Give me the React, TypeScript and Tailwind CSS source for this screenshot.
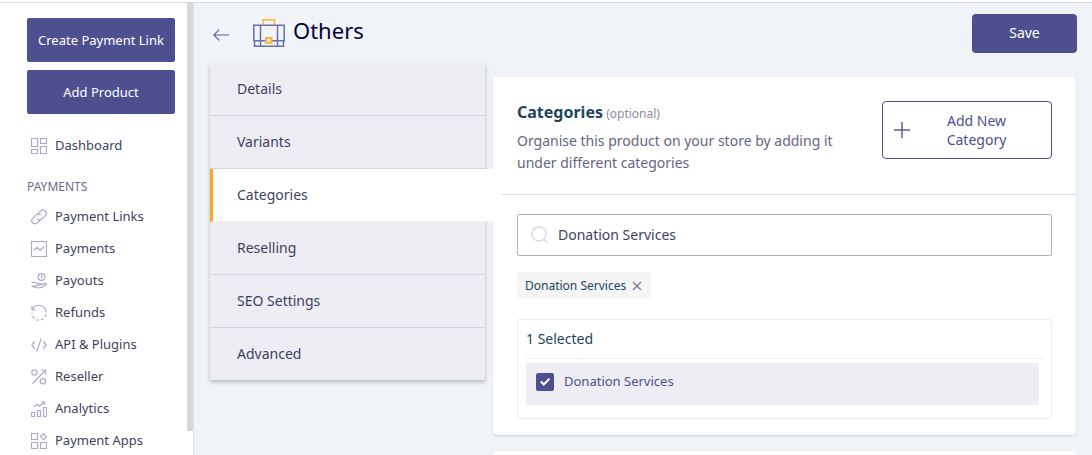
import { useState } from "react";
import type { ReactNode } from "react";

type IconProps = {
  children: ReactNode;
};

type MenuItem = {
  label: string;
  icon: ReactNode;
};

const Icon = ({ children }: IconProps) => (
  <svg
    viewBox="0 0 16 16"
    className="w-4 h-4 shrink-0"
    fill="none"
    stroke="#a9a9cf"
    strokeWidth="1.2"
    aria-hidden="true"
  >
    {children}
  </svg>
);

const dashboardIcon = (
  <Icon>
    <path d="M.5.5h6v8h-6zM9.5.5h6v5h-6zM.5 11.5h6v4h-6zM9.5 8.5h6v7h-6z" />
  </Icon>
);

const menu: MenuItem[] = [
  {
    label: "Payment Links",
    icon: (
      <Icon>
        <path d="M6.6 5.2l3-3.1a3.2 3.2 0 0 1 4.700 4.500l-3.300 3.300a3.200 3.200 0 0 1-4.700 0M9.400 10.800l-3 3.100a3.200 3.200 0 0 1-4.700-4.500L5 6.100a3.200 3.200 0 0 1 4.700 0" />
      </Icon>
    ),
  },
  {
    label: "Payments",
    icon: (
      <Icon>
        <path d="M.5.5h15v15H.5zM3 9.500l3.200-3.200 3 3L13 5.800" />
      </Icon>
    ),
  },
  {
    label: "Payouts",
    icon: (
      <Icon>
        <circle cx="10.5" cy="4" r="3.4" />
        <path d="M10 2.500h.7v3" />
        <path d="M.5 9.500C3 8.600 4.500 9.200 6 10.500h3c1.300 0 1.300 1.700 0 1.700H6M10.300 11.600l3.600-1.200c1.600-.4 2 .9.900 1.500-2.300 1.500-4.300 3.100-6.800 3.100-2.800 0-4.500-1.500-7.500-1.500z" />
      </Icon>
    ),
  },
  {
    label: "Refunds",
    icon: (
      <Icon>
        <path d="M1 1v4h4M1.500 4.700A7 7 0 0 1 15 7.500" />
        <path
          d="M15 8.500A7 7 0 0 1 1 8"
          strokeDasharray="2.5 2.5"
          strokeDashoffset="-1"
        />
      </Icon>
    ),
  },
  {
    label: "API & Plugins",
    icon: (
      <Icon>
        <path d="M3.700 4.500L.7 8l3 3.500M12.300 4.500l3 3.500-3 3.500M10.300 1.500l-4.600 13" />
      </Icon>
    ),
  },
  {
    label: "Reseller",
    icon: (
      <Icon>
        <circle cx="3.5" cy="3.5" r="2.7" />
        <circle cx="12" cy="12.3" r="2.7" />
        <path d="M1.500 14.500L14.500 1.200M10 1h4.500v4.500" />
      </Icon>
    ),
  },
  {
    label: "Analytics",
    icon: (
      <Icon>
        <path d="M.5 11.500h3v4h-3zM6.500 9.500h3v6h-3zM12.500 6.500h3v9h-3zM3 5.500l3-2 2.500 1.500L13 1.500M9.800 1h3.700v3" />
      </Icon>
    ),
  },
  {
    label: "Payment Apps",
    icon: (
      <Icon>
        <path d="M.5.5h6v6h-6zM.5 9.500h6v6h-6zM9.500 9.500h6v6h-6zM12.500.6l3 3-3 3-3-3z" />
      </Icon>
    ),
  },
];

const tabs = [
  "Details",
  "Variants",
  "Categories",
  "Reselling",
  "SEO Settings",
  "Advanced",
];

const Sidebar = () => (
  <aside className="w-[187px] shrink-0 overflow-hidden bg-white pt-[15px] pl-[27px] pr-3 text-[13px] text-[#3f3f5f]">
    <div className="flex flex-col gap-2 text-white">
      <button className="h-11 rounded-xs bg-[#4e4f8f] pt-px whitespace-nowrap">
        Create Payment Link
      </button>
      <button className="h-11 rounded-xs bg-[#4e4f8f] pt-px">
        Add Product
      </button>
    </div>

    <nav className="mt-4">
      <a href="#dashboard" className="flex h-8 items-center gap-2 pl-1">
        {dashboardIcon}
        Dashboard
      </a>
      <h2 className="mt-[15px] h-5 text-xs leading-5 text-[#6b6b8d]">
        PAYMENTS
      </h2>
      <ul className="mt-1">
        {menu.map((item) => (
          <li key={item.label}>
            <a
              href="#menu"
              className="flex h-8 items-center gap-2 pl-1 whitespace-nowrap"
            >
              {item.icon}
              {item.label}
            </a>
          </li>
        ))}
      </ul>
    </nav>
  </aside>
);

const BriefcaseIcon = () => (
  <svg viewBox="0 0 32 28" className="w-8 h-7" fill="none" aria-hidden="true">
    <g stroke="#6c6da6" strokeWidth="1.5">
      <path d="M.8 6.200h30.400v15.600H.8zM1.500 21.800h29v5.400h-29zM7.500 6.200v21M24.500 6.200v21" />
    </g>
    <path d="M10 6V.8h11.500V6" stroke="#fdb833" strokeWidth="1.5" />
    <path
      d="M13 18.800h5.500v5H13z"
      fill="#f0f4f8"
      stroke="#fdb01e"
      strokeWidth="1.8"
    />
  </svg>
);

export default function App() {
  const [active, setActive] = useState("Categories");
  const [query, setQuery] = useState("Donation Services");
  const [checked, setChecked] = useState(true);

  return (
    <div className="flex h-screen flex-col overflow-hidden bg-white font-['Noto_Sans',sans-serif]">
      <div className="h-[3px] shrink-0 border-b border-[#d8d8e0]" />
      <div className="flex min-h-0 flex-1">
        <Sidebar />
        {/* Scroll track */}
        <div className="w-[7px] shrink-0 border-r border-[#e2e5ec] bg-white pb-6">
          <div className="h-full bg-[#d7d6dd]" />
        </div>

        <main className="min-w-0 flex-1 overflow-hidden bg-[#f0f4f8] pl-4 pr-[15px]">
          <header className="flex h-[60px] items-center">
            <button aria-label="Back" className="ml-[3px] mt-1">
              <svg
                viewBox="0 0 16 12"
                className="w-4 h-3"
                fill="none"
                stroke="#5c5d9c"
                strokeWidth="1.2"
              >
                <path d="M16 6H.8M6.200.6L.8 6l5.400 5.400" />
              </svg>
            </button>
            <div className="ml-6">
              <BriefcaseIcon />
            </div>
            <h1 className="ml-2 mb-1.5 text-[22px] leading-8 text-[#06003f]">
              Others
            </h1>
            <button className="ml-auto h-[39px] w-[105px] rounded-sm bg-[#4e4f8f] text-sm text-white">
              Save
            </button>
          </header>

          <div className="flex items-start pr-px">
            {/* Product tabs */}
            <nav className="relative z-10 mr-2 w-[275px] shrink-0 bg-[#eeedf4] shadow-[0_2px_4px_rgba(0,0,0,0.25)]">
              {tabs.map((tab) => (
                <button
                  key={tab}
                  onClick={() => setActive(tab)}
                  className={`block h-[53px] border-b text-left text-sm text-[#3f3f5f] last:h-[52px] last:border-b-0 ${
                    tab === active
                      ? "w-[283px] border-b-[#eeedf4] border-l-3 border-l-[#fdaa1c] bg-white pl-6"
                      : "w-full border-b-[#d5d4dc] pl-[27px]"
                  }`}
                >
                  {tab}
                </button>
              ))}
            </nav>

            <div className="mt-[14px] min-w-0 flex-1">
              <section className="rounded-sm bg-white pb-4 shadow-[0_1px_2px_rgba(120,150,190,0.35)]">
                <div className="flex items-start justify-between px-6 pt-6">
                  <div>
                    <h2 className="text-base leading-[22px] font-bold text-[#1c455c]">
                      Categories{" "}
                      <span className="-ml-px text-xs font-normal text-[#8f8aa3]">
                        (optional)
                      </span>
                    </h2>
                    <p className="mt-[7px] max-w-[340px] text-sm leading-[22px] text-[#66657f]">
                      Organise this product on your store by adding it under
                      different categories
                    </p>
                  </div>
                  <button className="flex h-[58px] w-[170px] shrink-0 items-center rounded-sm border border-[#4e4f8f] pl-[11px] text-sm leading-[19px] text-[#4e4f8f]">
                    <svg
                      viewBox="0 0 16 16"
                      className="w-4 h-4"
                      stroke="#5c5d9c"
                      aria-hidden="true"
                    >
                      <path d="M8 0v16M0 8h16" strokeWidth="1.5" />
                    </svg>
                    <span className="flex-1 pl-7 pr-9">Add New Category</span>
                  </button>
                </div>

                <div className="mt-5 ml-[9px] border-t border-[#d9d9de]" />

                <div className="px-6 pt-[19px]">
                  <label className="flex h-[42px] items-center gap-[10px] rounded-xs border border-[#b3b0bf] px-3">
                    <svg
                      viewBox="0 0 18 18"
                      className="w-[18px] h-[18px] shrink-0"
                      fill="none"
                      stroke="#d9d9e0"
                      strokeWidth="1.4"
                      aria-hidden="true"
                    >
                      <circle cx="9" cy="8" r="7" />
                      <path d="M13.800 13l3.500 4" />
                    </svg>
                    <input
                      type="text"
                      aria-label="Search categories"
                      value={query}
                      onChange={(e) => setQuery(e.target.value)}
                      className="min-w-0 flex-1 text-sm text-[#3f3f5f] outline-none"
                    />
                  </label>

                  {/* Selected chip */}
                  <div className="mt-4 flex h-[27px] w-fit items-center gap-[6px] bg-[#f5f5f5] pl-2 pr-[9px] text-xs text-[#1c455c]">
                    Donation Services
                    <button aria-label="Remove Donation Services">
                      <svg
                        viewBox="0 0 10 10"
                        className="w-[10px] h-[10px]"
                        stroke="#77768a"
                        strokeWidth="1.3"
                      >
                        <path d="M1 1l8 8M9 1L1 9" />
                      </svg>
                    </button>
                  </div>

                  <div className="mt-5 rounded-xs border border-[#eeedf2] px-2 pb-[13px]">
                    <h3 className="h-[39px] border-b border-[#eeedf0] text-sm leading-[38px] text-[#1c455c]">
                      1 Selected
                    </h3>
                    <label className="mt-1 mr-1 flex h-[42px] items-center gap-[10px] bg-[#eeedf4] px-[10px] pb-1 text-[13px] text-[#4e4f8f]">
                      <span className="grid">
                        <input
                          type="checkbox"
                          checked={checked}
                          onChange={(e) => setChecked(e.target.checked)}
                          className="col-start-1 row-start-1 h-[18px] w-[18px] appearance-none rounded-xs border border-[#4e4f8f] bg-white checked:bg-[#4e4f8f]"
                        />
                        <svg
                          viewBox="0 0 18 18"
                          className="pointer-events-none col-start-1 row-start-1 h-[18px] w-[18px]"
                          fill="none"
                          stroke="#fff"
                          strokeWidth="2"
                          aria-hidden="true"
                        >
                          <path d="M4.800 8.500l3 3 5.600-5.800" />
                        </svg>
                      </span>
                      Donation Services
                    </label>
                  </div>
                </div>
              </section>

              <section className="mt-4 h-24 rounded-sm bg-white" />
            </div>
          </div>
        </main>
      </div>
    </div>
  );
}
